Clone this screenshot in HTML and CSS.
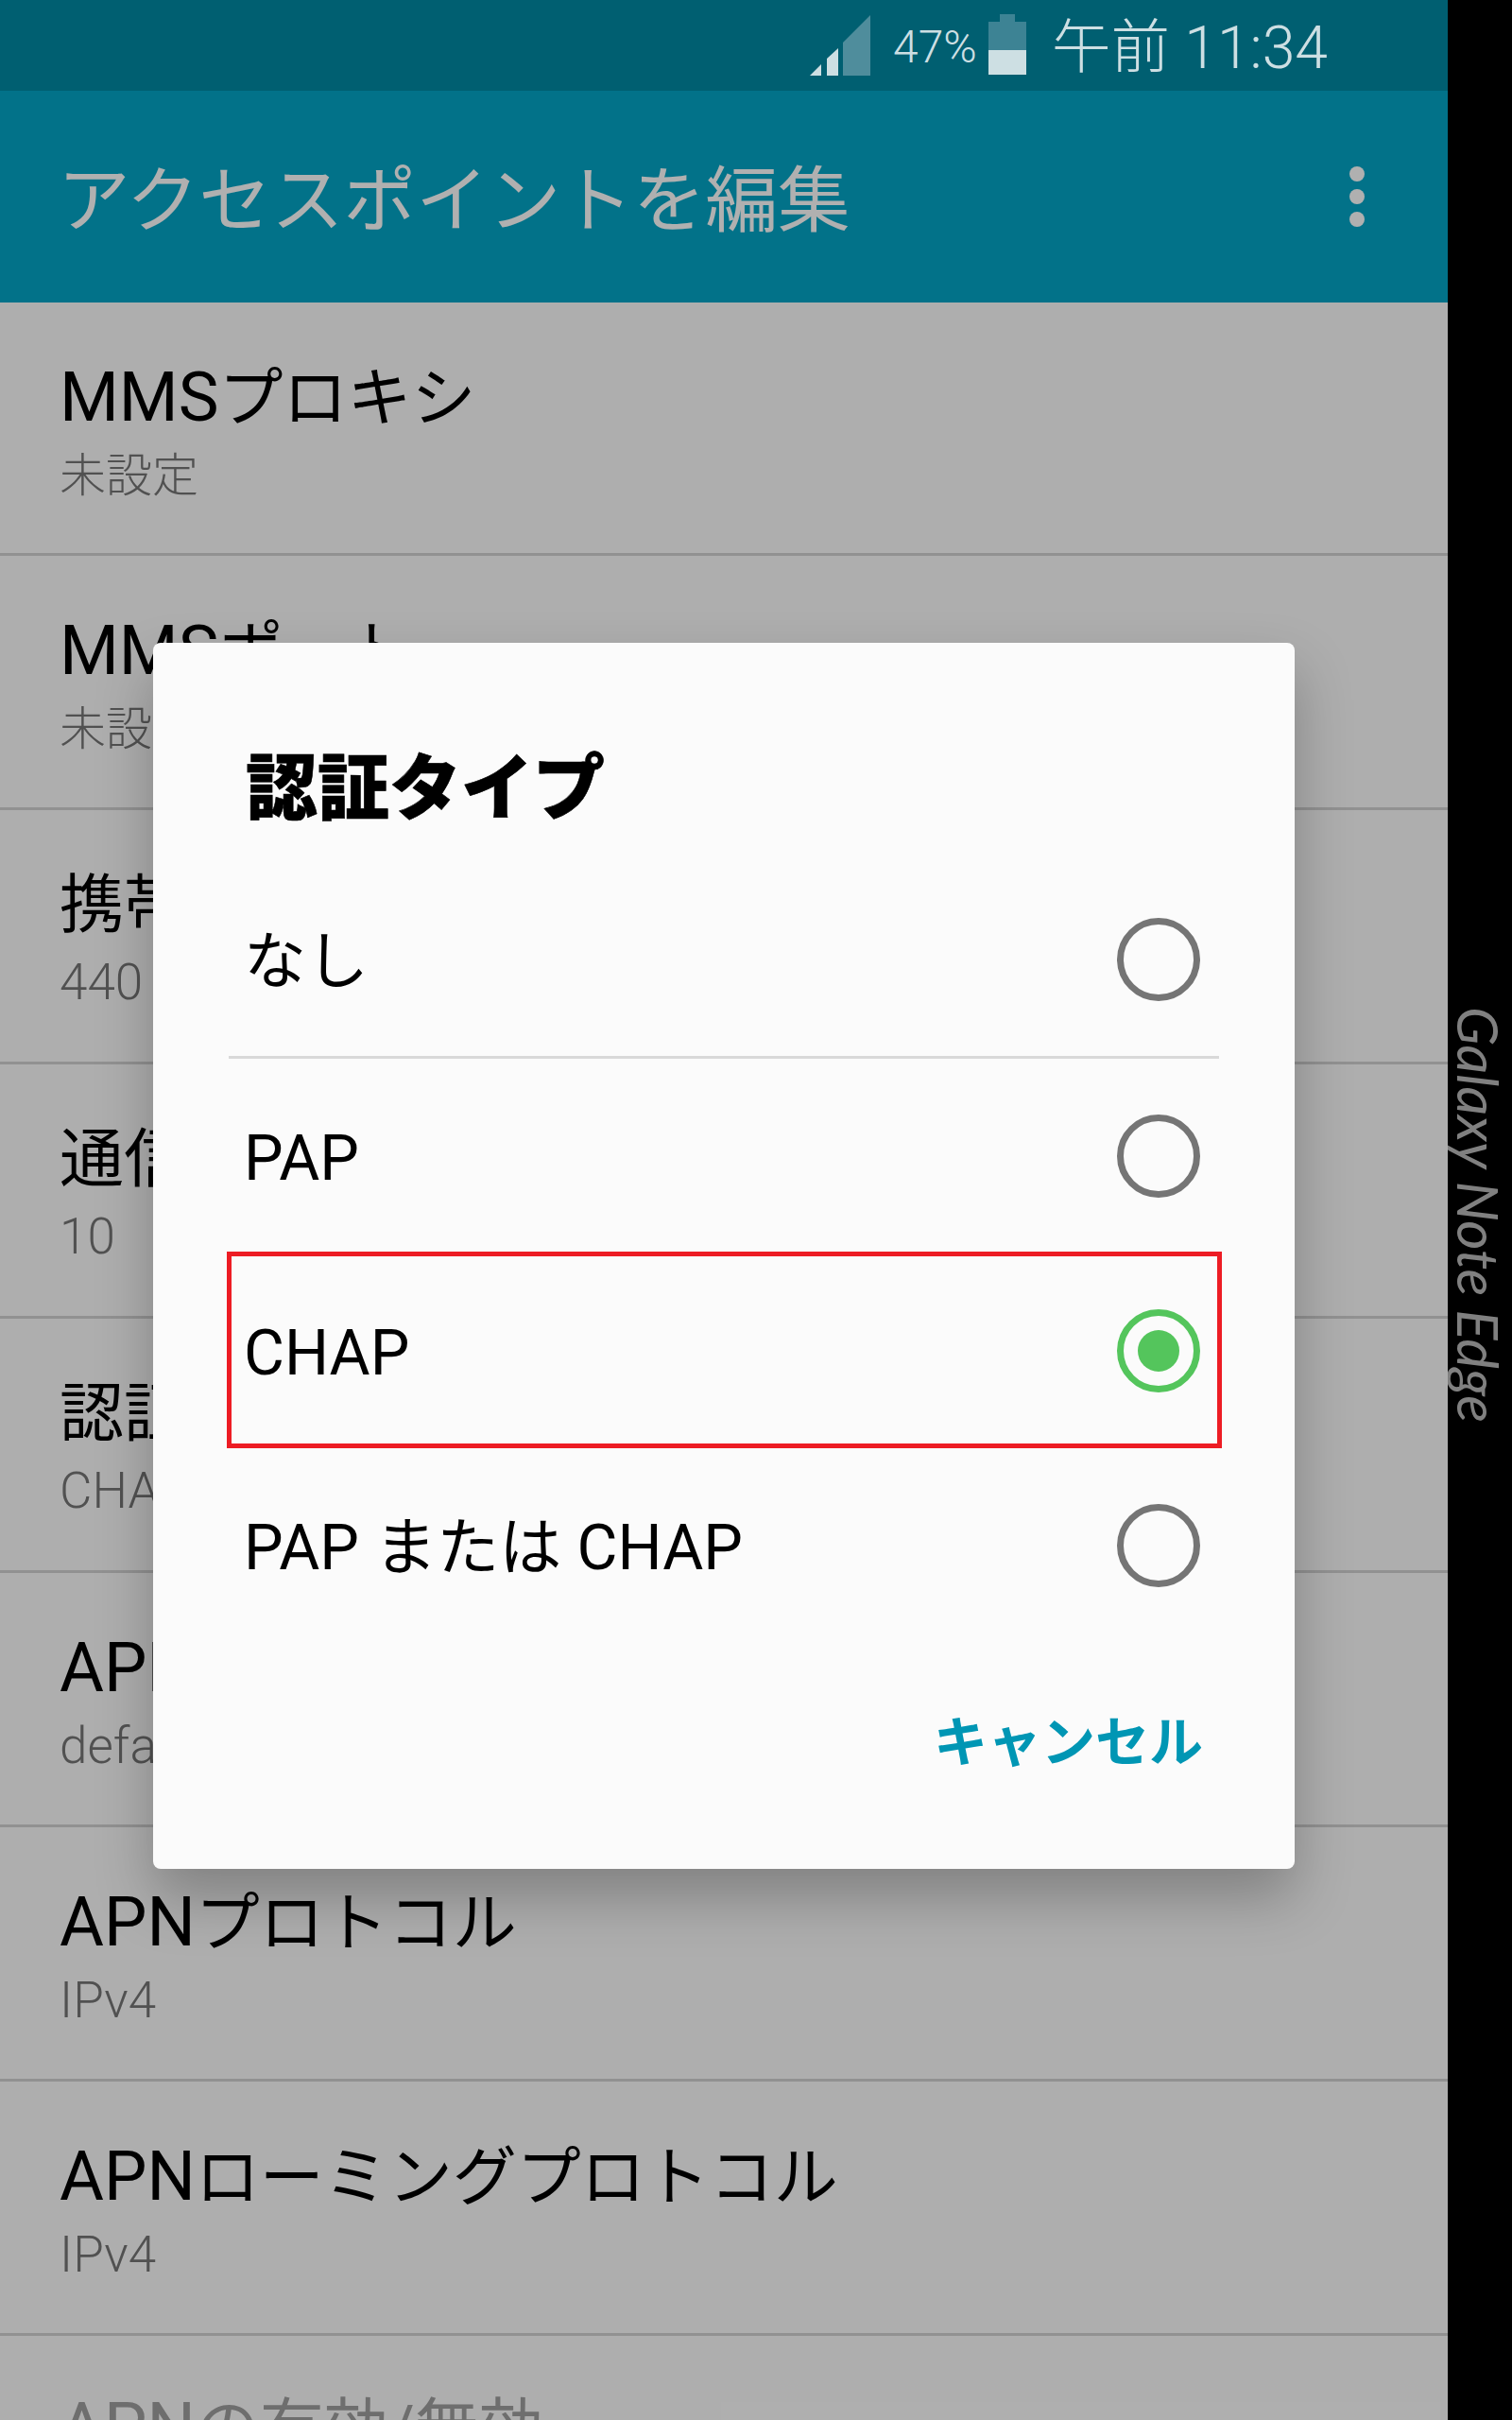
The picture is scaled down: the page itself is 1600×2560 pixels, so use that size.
FILE: index.html
```html
<!DOCTYPE html>
<html lang="ja">
<head>
<meta charset="utf-8">
<title>アクセスポイントを編集</title>
<link rel="stylesheet" href="styles.css">
</head>
<body>
<div class="device">
  <div class="screen">
    <header class="statusbar">
      <svg class="signal" viewBox="0 0 64 64" width="64" height="64" aria-hidden="true">
        <path class="sig-on" d="M0 64 12 52V64Z"/>
        <path class="sig-on" d="M18 46 30 35V64H18Z"/>
        <path class="sig-off" d="M35 29 64 0V64H35Z"/>
      </svg>
      <span class="battery-pct">47%</span>
      <span class="battery" aria-hidden="true"><span class="battery-nub"></span><span class="battery-body"><span class="battery-fill"></span></span></span>
      <span class="clock">午前 11:34</span>
    </header>
    <main class="app">
      <div class="toolbar">
        <h1 class="toolbar-title">アクセスポイントを編集</h1>
        <span class="overflow" aria-hidden="true"><i></i><i></i><i></i></span>
      </div>
      <ul class="settings">
        <li class="setting first"><span class="setting-title"><span class="latin">MMS</span>プロキシ</span><span class="setting-value">未設定</span></li>
        <li class="setting"><span class="setting-title"><span class="latin">MMS</span>ポート</span><span class="setting-value">未設定</span></li>
        <li class="setting"><span class="setting-title">携帯電話の国番号</span><span class="setting-value latin-value">440</span></li>
        <li class="setting"><span class="setting-title">通信事業者コード</span><span class="setting-value latin-value">10</span></li>
        <li class="setting"><span class="setting-title">認証タイプ</span><span class="setting-value latin-value">CHAP</span></li>
        <li class="setting"><span class="setting-title"><span class="latin">APN</span>タイプ</span><span class="setting-value latin-value">default</span></li>
        <li class="setting"><span class="setting-title"><span class="latin">APN</span>プロトコル</span><span class="setting-value latin-value">IPv4</span></li>
        <li class="setting"><span class="setting-title"><span class="latin">APN</span>ローミングプロトコル</span><span class="setting-value latin-value">IPv4</span></li>
        <li class="setting disabled"><span class="setting-title"><span class="latin">APN</span>の有効/無効</span></li>
      </ul>
      <div class="scrim">
        <section class="dialog">
          <h2 class="dialog-title">認証タイプ</h2>
          <div class="options">
            <div class="option divided"><span class="option-label">なし</span><span class="radio"></span></div>
            <div class="option"><span class="option-label">PAP</span><span class="radio"></span></div>
            <div class="option selected"><span class="option-label">CHAP</span><span class="radio checked"></span></div>
            <div class="option"><span class="option-label">PAP または CHAP</span><span class="radio"></span></div>
          </div>
          <div class="dialog-actions"><span class="cancel">キャンセル</span></div>
        </section>
      </div>
    </main>
  </div>
  <aside class="edge"><span class="edge-label">Galaxy Note Edge</span></aside>
</div>
</body>
</html>
```

FILE: styles.css
```css
* { box-sizing: border-box; }
html, body { margin: 0; padding: 0; }
body {
  width: 1600px;
  height: 2560px;
  overflow: hidden;
  background: #000;
  font-family: Roboto, "Noto Sans CJK JP", sans-serif;
}
.device { display: flex; width: 1600px; height: 2560px; }
.screen { width: 1532px; display: flex; flex-direction: column; overflow: hidden; }

.statusbar {
  height: 96px;
  flex: none;
  background: #005f71;
  color: #cddfe3;
  display: flex;
  align-items: flex-start;
  padding: 16px 0 0 857px;
}
.signal { flex: none; }
.sig-on { fill: #cddfe3; }
.sig-off { fill: #4f8d9c; }
.battery-pct { font-size: 48px; font-weight: 300; line-height: 56px; margin: 6px 0 0 24px; width: 101px; }
.battery { width: 40px; display: flex; flex-direction: column; align-items: center; flex: none; margin-top: -1px; }
.battery-nub { width: 16px; height: 8px; background: #3d8394; }
.battery-body { width: 40px; height: 56px; background: #3d8394; display: flex; align-items: flex-end; }
.battery-fill { width: 100%; height: 26px; background: #cddfe3; }
.clock { font-size: 62.5px; font-weight: 300; line-height: 70px; margin-left: 27px; white-space: nowrap; }

.app { position: relative; flex: 1; min-height: 0; background: #fafafa; }
.toolbar {
  height: 224px;
  background: #03a4c4;
  display: flex;
  align-items: center;
  justify-content: space-between;
  padding: 0 88px 0 61px;
}
.toolbar-title { margin: 0; padding-top: 9px; font-size: 76.6px; font-weight: 400; color: #fcfcfc; line-height: 100px; }
.overflow { display: flex; flex-direction: column; gap: 8px; }
.overflow i { width: 16px; height: 16px; border-radius: 50%; background: #fcfcfc; display: block; }

.settings { list-style: none; margin: 0; padding: 0; }
.setting {
  height: 269px;
  border-bottom: 3px solid #d0d0d0;
  padding: 18px 63px 0;
  display: flex;
  flex-direction: column;
  justify-content: center;
  white-space: nowrap;
}
.setting.first { height: 268px; }
.setting-title { font-size: 68px; line-height: 83px; color: #000; }
.latin { font-size: 72px; line-height: 83px; }
.setting-value { font-size: 49px; line-height: 83px; margin-top: -2px; font-weight: 300; color: #757575; }
.latin-value { font-size: 53px; }
.setting.disabled { justify-content: flex-start; padding-top: 56px; }
.setting.disabled .setting-title { color: #9e9e9e; }

.scrim {
  position: absolute;
  inset: 0;
  background: rgba(0, 0, 0, .3);
  display: flex;
  align-items: center;
  justify-content: center;
}
.dialog {
  width: 1208px;
  height: 1297px;
  background: #fbfbfb;
  border-radius: 8px;
  box-shadow: 0 30px 60px rgba(0, 0, 0, .26);
  padding: 0 80px;
  display: flex;
  flex-direction: column;
}
.dialog-title {
  margin: 0;
  height: 234px;
  padding: 105px 0 0 18px;
  font-size: 76px;
  font-weight: 900;
  line-height: 100px;
  color: #000;
  -webkit-text-stroke: 0.6px #000;
}
.options { display: flex; flex-direction: column; }
.option {
  position: relative;
  height: 206px;
  display: flex;
  align-items: center;
  justify-content: space-between;
  padding: 0 20px 0 16px;
  font-size: 66px;
  line-height: 100px;
  color: #000;
}
.option-label { margin-top: 6px; }
.option.divided { border-bottom: 3px solid #d9d9d9; }
.option.selected::after {
  content: "";
  position: absolute;
  top: -2px;
  left: -2px;
  right: -3px;
  bottom: 0;
  border: 5px solid #ed1c24;
}
.radio {
  width: 88px;
  height: 88px;
  border-radius: 50%;
  border: 7px solid #757575;
  display: flex;
  align-items: center;
  justify-content: center;
  flex: none;
}
.radio.checked { border-color: #54c55c; }
.radio.checked::before {
  content: "";
  width: 44px;
  height: 44px;
  border-radius: 50%;
  background: #54c55c;
}
.dialog-actions { display: flex; justify-content: flex-end; padding: 56px 17px 0 0; }
.cancel { font-size: 57px; font-weight: 700; line-height: 100px; color: #0096b4; }

.edge {
  width: 68px;
  background: #000;
  display: flex;
  justify-content: flex-end;
  align-items: flex-start;
  padding: 1065px 6px 0 0;
}
.edge-label {
  writing-mode: vertical-rl;
  font-family: Lato, sans-serif;
  font-style: italic;
  font-weight: 400;
  font-size: 60px;
  line-height: 58px;
  color: #808080;
  white-space: nowrap;
}
```
